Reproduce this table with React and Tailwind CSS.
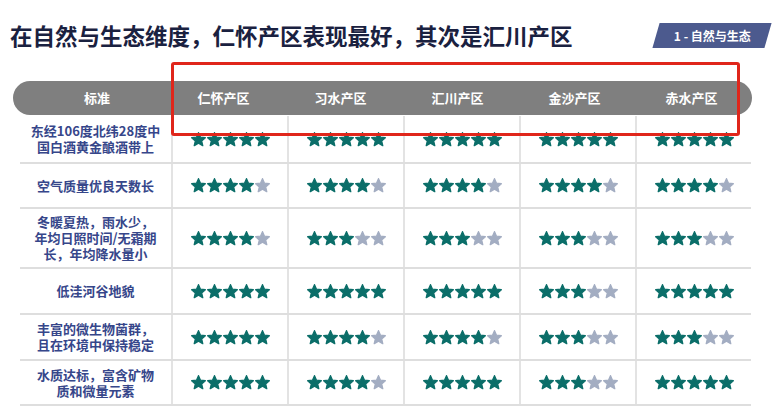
import React from "react";

const regions = ["仁怀产区", "习水产区", "汇川产区", "金沙产区", "赤水产区"];

const rows = [
  { label: ["东经106度北纬28度中", "国白酒黄金酿酒带上"], h: "h-[48px]", stars: [5, 5, 5, 5, 5] },
  { label: ["空气质量优良天数长"], h: "h-[45px]", stars: [4, 4, 4, 4, 4] },
  { label: ["冬暖夏热，雨水少，", "年均日照时间/无霜期", "长，年均降水量小"], h: "h-[60px]", stars: [4, 3, 3, 3, 3] },
  { label: ["低洼河谷地貌"], h: "h-[46px]", stars: [5, 5, 5, 3, 5] },
  { label: ["丰富的微生物菌群，", "且在环境中保持稳定"], h: "h-[46px]", stars: [5, 4, 4, 3, 3] },
  { label: ["水质达标，富含矿物", "质和微量元素"], h: "h-[45px]", stars: [5, 4, 5, 3, 5] },
];

function Star({ on }) {
  const c = on ? "#0b6e69" : "#a3adc2";
  return (
    <svg width="15" height="15" viewBox="1 1.2 22 21.6">
      <polygon
        points="12,2 14.9,8.6 22,9.3 16.6,14 18.2,21 12,17.3 5.8,21 7.4,14 2,9.3 9.1,8.6"
        fill={c}
        stroke={c}
        strokeWidth="2"
        strokeLinejoin="round"
      />
    </svg>
  );
}

function Stars({ n }) {
  return (
    <div className="flex gap-[1px]">
      {[0, 1, 2, 3, 4].map((i) => (
        <Star key={i} on={i < n} />
      ))}
    </div>
  );
}

export default function App() {
  return (
    <div
      className="relative w-[779px] h-[409px] bg-white overflow-hidden"
      style={{ fontFamily: '"Noto Sans CJK SC", "Noto Sans", sans-serif' }}
    >
      {/* title */}
      <div className="flex items-center justify-between pt-[22px] pl-[10px] pr-[11px] h-[48px]">
        <h1 className="text-[22.5px] font-bold text-[#1a2140] leading-none">
          在自然与生态维度，仁怀产区表现最好，其次是汇川产区
        </h1>
        <div className="-skew-x-[16deg] bg-[#4c5a8e] w-[112px] h-[25px] flex items-center justify-center">
          <span className="skew-x-[16deg] text-white text-[12px] font-bold">1 - 自然与生态</span>
        </div>
      </div>

      {/* header bar */}
      <div className="mt-[33px] ml-[13px] w-[739px] h-[34px] rounded-full bg-[#7f7f7f] grid grid-cols-[152px_repeat(5,117px)] items-center text-white text-[13px] font-bold">
        <div className="pl-4 text-center">标准</div>
        {regions.map((r) => (
          <div key={r} className="text-center">{r}</div>
        ))}
      </div>

      {/* table */}
      <div className="ml-[20px] w-[731px] mt-[1px]">
        {rows.map((row, i) => (
          <div
            key={i}
            className={`grid grid-cols-[151px_repeat(5,116px)] border-b-2 border-[#dedede] ${row.h}`}
          >
            <div className="flex flex-col items-center justify-center text-[13px] font-bold leading-[16px] text-[#36468a] text-center">
              {row.label.map((l) => (
                <span key={l}>{l}</span>
              ))}
            </div>
            {row.stars.map((n, j) => (
              <div key={j} className="flex items-center justify-center border-l-2 border-[#e3e3e3]">
                <Stars n={n} />
              </div>
            ))}
          </div>
        ))}
      </div>

      {/* highlight frame */}
      <div className="absolute left-[171px] top-[62px] w-[569px] h-[74px] border-[3px] border-[#e0261b] rounded-[3px]" />
    </div>
  );
}
